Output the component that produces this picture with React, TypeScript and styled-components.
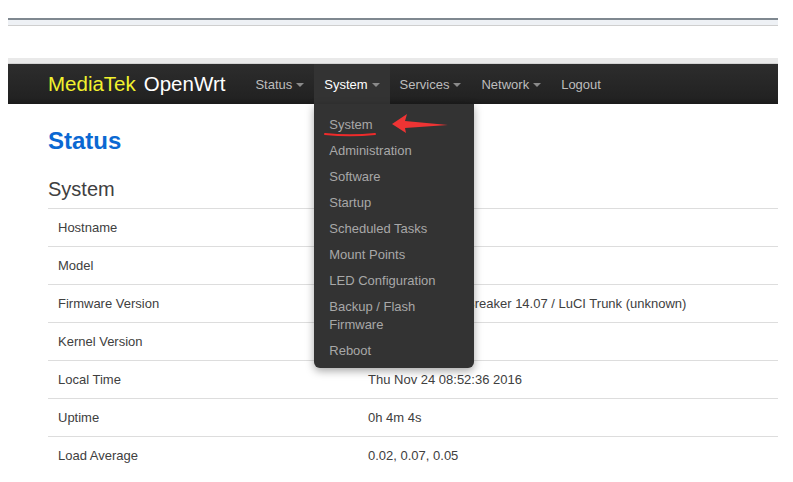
import styled, { createGlobalStyle } from "styled-components";

const GlobalStyle = createGlobalStyle`
  body {
    margin: 0;
    background: #fff;
    font-family: "Liberation Sans", Arial, sans-serif;
  }
`;

const Page = styled.div`
  padding: 18px 15px 0 8px;
`;

const ChromeStrip = styled.div`
  height: 5px;
  border-top: 2px solid #7f8890;
  border-bottom: 1px solid #cfcfcf;
  background: #eef1f5;
`;

const BlankArea = styled.div`
  height: 32px;
`;

const SubStrip = styled.div`
  height: 5px;
  background: #e9e9e9;
  border-bottom: 1px solid #d2d2d2;
`;

const Navbar = styled.div`
  display: flex;
  align-items: center;
  height: 40px;
  background: linear-gradient(#2d2d2d, #222222 85%, #1b1b1b);
  padding-left: 40px;
`;

const Brand = styled.div`
  display: flex;
  gap: 8px;
  font-size: 20.5px;
  color: #ffffff;
  white-space: nowrap;
`;

const BrandVendor = styled.span`
  color: #f2f22e;
`;

const NavList = styled.div`
  display: flex;
  margin-left: 20px;
  height: 40px;
`;

const NavItem = styled.div<{ $active?: boolean }>`
  position: relative;
  display: flex;
  align-items: center;
  padding: 0 10px;
  font-size: 13px;
  color: ${(p) => (p.$active ? "#ffffff" : "#bdbdbd")};
  background: ${(p) => (p.$active ? "#333333" : "transparent")};
  white-space: nowrap;
`;

const Caret = styled.span`
  display: inline-block;
  margin-left: 4px;
  margin-top: 2px;
  border-top: 4px solid #8a8a8a;
  border-left: 4px solid transparent;
  border-right: 4px solid transparent;
`;

const Dropdown = styled.div`
  position: absolute;
  top: 100%;
  left: 0;
  width: 160px;
  padding: 8px 0 4px;
  background: #333333;
  border-radius: 0 0 6px 6px;
  box-shadow: 0 3px 8px rgba(0, 0, 0, 0.35);
  box-sizing: border-box;
  z-index: 10;
`;

const MenuItem = styled.div`
  padding: 4px 15px;
  line-height: 18px;
  font-size: 13px;
  color: #a8a8a8;
  white-space: normal;
`;

const Annotation = styled.svg`
  position: absolute;
  left: 0;
  top: 0;
  pointer-events: none;
`;

const Content = styled.div`
  padding-left: 40px;
`;

const Title = styled.h2`
  margin: 24px 0 0;
  font-size: 24px;
  line-height: 26px;
  font-weight: bold;
  color: #0b68d2;
`;

const Section = styled.h3`
  margin: 23px 0 7px;
  font-size: 20px;
  line-height: 24px;
  font-weight: normal;
  color: #404040;
`;

const Row = styled.div`
  display: grid;
  grid-template-columns: 320px 1fr;
  align-items: center;
  height: 38px;
  box-sizing: border-box;
  border-top: 1px solid #dddddd;
  font-size: 13px;
  color: #404040;
`;

const Label = styled.div`
  padding-left: 10px;
`;

const Value = styled.div`
  white-space: nowrap;
`;

const navItems = ["Status", "System", "Services", "Network"];

const systemMenu = [
  "System",
  "Administration",
  "Software",
  "Startup",
  "Scheduled Tasks",
  "Mount Points",
  "LED Configuration",
  "Backup / Flash Firmware",
  "Reboot",
];

const rows = [
  ["Hostname", "mylinkit"],
  ["Model", "LinkIt7688"],
  ["Firmware Version", "OpenWrt Barrier Breaker 14.07 / LuCI Trunk (unknown)"],
  ["Kernel Version", "3.10.14"],
  ["Local Time", "Thu Nov 24 08:52:36 2016"],
  ["Uptime", "0h 4m 4s"],
  ["Load Average", "0.02, 0.07, 0.05"],
];

export default function App() {
  return (
    <>
      <GlobalStyle />
      <Page>
        <ChromeStrip />
        <BlankArea />
        <SubStrip />
        <Navbar>
          <Brand>
            <BrandVendor>MediaTek</BrandVendor>
            <span>OpenWrt</span>
          </Brand>
          <NavList>
            {navItems.map((name) => (
              <NavItem key={name} $active={name === "System"}>
                {name}
                <Caret />
                {name === "System" && (
                  <Dropdown>
                    {systemMenu.map((m) => (
                      <MenuItem key={m}>{m}</MenuItem>
                    ))}
                    <Annotation width="160" height="40" viewBox="0 0 160 40">
                      <path
                        d="M11 30 Q36 32.5 61 30"
                        stroke="#ee2b2b"
                        strokeWidth="2"
                        fill="none"
                        strokeLinecap="round"
                      />
                      <path
                        d="M78 20 L93 10 L91 17 L134 21 L91 24 L92 29 Z"
                        fill="#ee3434"
                      />
                    </Annotation>
                  </Dropdown>
                )}
              </NavItem>
            ))}
            <NavItem>Logout</NavItem>
          </NavList>
        </Navbar>
        <Content>
          <Title>Status</Title>
          <Section>System</Section>
          {rows.map(([label, value]) => (
            <Row key={label}>
              <Label>{label}</Label>
              <Value>{value}</Value>
            </Row>
          ))}
        </Content>
      </Page>
    </>
  );
}
